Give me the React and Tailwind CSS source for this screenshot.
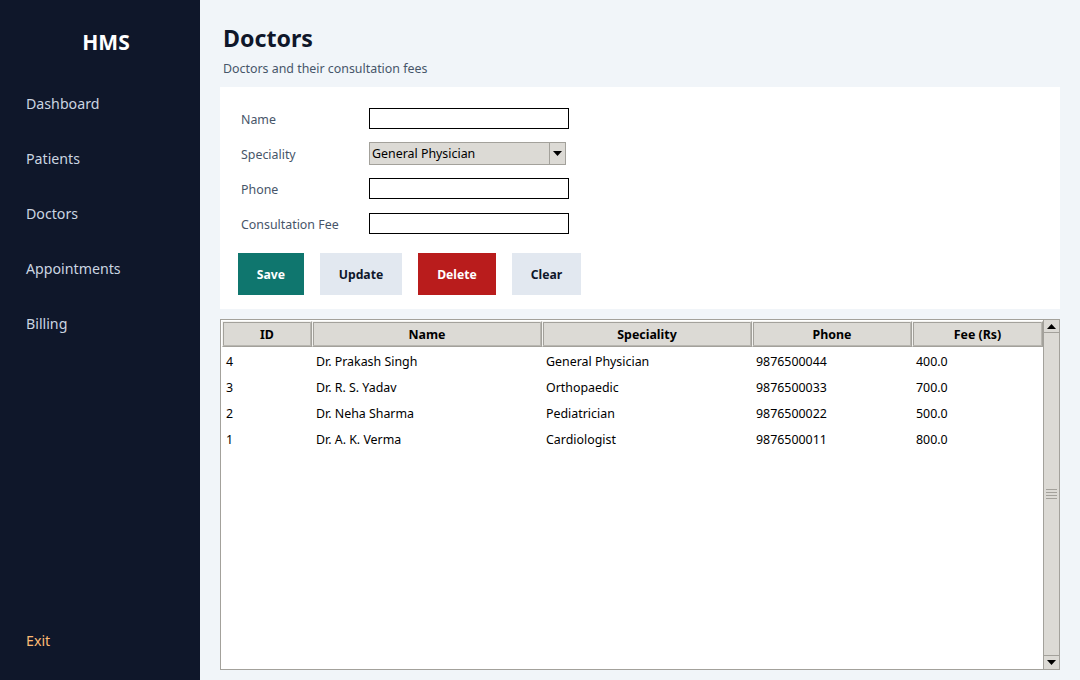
import React from "react";

const nav = ["Dashboard", "Patients", "Doctors", "Appointments", "Billing"];
const cols = [
  { k: "ID", w: "w-[90px]" },
  { k: "Name", w: "w-[230px]" },
  { k: "Speciality", w: "w-[210px]" },
  { k: "Phone", w: "w-[160px]" },
  { k: "Fee (Rs)", w: "w-[131px]" },
];
const rows = [
  ["4", "Dr. Prakash Singh", "General Physician", "9876500044", "400.0"],
  ["3", "Dr. R. S. Yadav", "Orthopaedic", "9876500033", "700.0"],
  ["2", "Dr. Neha Sharma", "Pediatrician", "9876500022", "500.0"],
  ["1", "Dr. A. K. Verma", "Cardiologist", "9876500011", "800.0"],
];

function Field({ label, children }) {
  return (
    <div className="flex items-center h-[21px]">
      <div className="w-[131px] pl-[3px] pt-[4px] text-[12.4px] text-[#475569]">{label}</div>
      {children}
    </div>
  );
}

export default function App() {
  return (
    <div
      className="flex w-[1080px] h-[680px] overflow-hidden bg-[#f1f5f9]"
      style={{ fontFamily: '"Noto Sans", "Open Sans", sans-serif' }}
    >
      <aside className="w-[200px] shrink-0 bg-[#0f172a] flex flex-col">
        <div className="mt-[28px] h-[28px] leading-[28px] pl-[12px] text-center text-white font-bold text-[21px]">HMS</div>
        <div className="mt-[20px] flex flex-col">
          {nav.map((n) => (
            <div key={n} className="h-[55px] flex items-center pl-[26px] text-[14.2px] text-[#cbd5e1]">
              {n}
            </div>
          ))}
        </div>
        <div className="mt-auto mb-[12px] h-[55px] flex items-center pl-[26px] text-[14.2px] text-[#fdba74]">Exit</div>
      </aside>

      <main className="flex-1 flex flex-col px-[20px] pb-[10px]">
        <h1 className="mt-[22px] h-[32px] leading-[32px] pl-[3px] text-[23.2px] font-bold text-[#0f172a]">Doctors</h1>
        <p className="mt-[6px] h-[18px] leading-[18px] pl-[3px] text-[12.4px] text-[#475569]">Doctors and their consultation fees</p>

        <section className="mt-[9px] bg-white pl-[18px] pt-[21px] pb-[14px] flex flex-col">
          <div className="flex flex-col gap-[14px]">
            <Field label="Name">
              <div className="w-[200px] h-[21px] border border-black bg-white" />
            </Field>
            <Field label="Speciality">
              <div className="w-[197px] h-[23px] border border-[#a3a19b] bg-[#dcdad5] flex items-center">
                <span className="flex-1 pl-[2px] pt-[2px] text-[12.4px] text-black leading-none">General Physician</span>
                <div className="w-[16px] h-[21px] border-l border-[#a3a19b] flex items-center justify-center">
                  <svg width="9" height="5" viewBox="0 0 9 5"><path d="M0 0H9L4.5 5Z" fill="#000" /></svg>
                </div>
              </div>
            </Field>
            <Field label="Phone">
              <div className="w-[200px] h-[21px] border border-black bg-white" />
            </Field>
            <Field label="Consultation Fee">
              <div className="w-[200px] h-[21px] border border-black bg-white" />
            </Field>
          </div>
          <div className="mt-[19px] flex gap-[16px]">
            <button className="w-[66px] h-[42px] pt-[2px] bg-[#0f766e] text-white font-bold text-[12.2px]">Save</button>
            <button className="w-[82px] h-[42px] pt-[2px] bg-[#e2e8f0] text-[#0f172a] font-bold text-[12.2px]">Update</button>
            <button className="w-[78px] h-[42px] pt-[2px] bg-[#b91c1c] text-white font-bold text-[12.2px]">Delete</button>
            <button className="w-[69px] h-[42px] pt-[2px] bg-[#e2e8f0] text-[#0f172a] font-bold text-[12.2px]">Clear</button>
          </div>
        </section>

        <section className="mt-[10px] flex-1 border border-[#a3a19b] bg-white flex">
          <div className="flex-1 pl-[1px] pt-[1px]">
            <div className="flex">
              {cols.map((c) => (
                <div
                  key={c.k}
                  className={`${c.w} h-[26px] pt-[2px] bg-[#dcdad5] border border-[#a3a19b] flex items-center justify-center text-[12.4px] font-bold text-black`}
                  style={{ borderTopColor: "#f4f3f0", borderLeftColor: "#f4f3f0", boxShadow: "inset -1px -1px 0 #b9b7b1, inset 1px 1px 0 #a3a19b" }}
                >
                  {c.k}
                </div>
              ))}
            </div>
            {rows.map((r) => (
              <div key={r[0]} className="flex h-[26px] pt-[5px] items-center">
                {r.map((v, i) => (
                  <div key={i} className={`${cols[i].w} pl-[4px] text-[12.4px] text-black`}>
                    {v}
                  </div>
                ))}
              </div>
            ))}
          </div>
          <div className="w-[16px] bg-[#dcdad5] border-l border-[#a3a19b] flex flex-col">
            <div className="h-[13px] border-b border-[#a3a19b] flex items-center justify-center">
              <svg width="9" height="5" viewBox="0 0 9 5"><path d="M0 5H9L4.5 0Z" fill="#000" /></svg>
            </div>
            <div className="flex-1 flex items-center justify-center">
              <div className="flex flex-col gap-[2px]">
                <div className="w-[11px] h-px bg-[#a3a19b]" />
                <div className="w-[11px] h-px bg-[#a3a19b]" />
                <div className="w-[11px] h-px bg-[#a3a19b]" />
                <div className="w-[11px] h-px bg-[#a3a19b]" />
              </div>
            </div>
            <div className="h-[14px] border-t border-[#a3a19b] flex items-center justify-center">
              <svg width="9" height="5" viewBox="0 0 9 5"><path d="M0 0H9L4.5 5Z" fill="#000" /></svg>
            </div>
          </div>
        </section>
      </main>
    </div>
  );
}
